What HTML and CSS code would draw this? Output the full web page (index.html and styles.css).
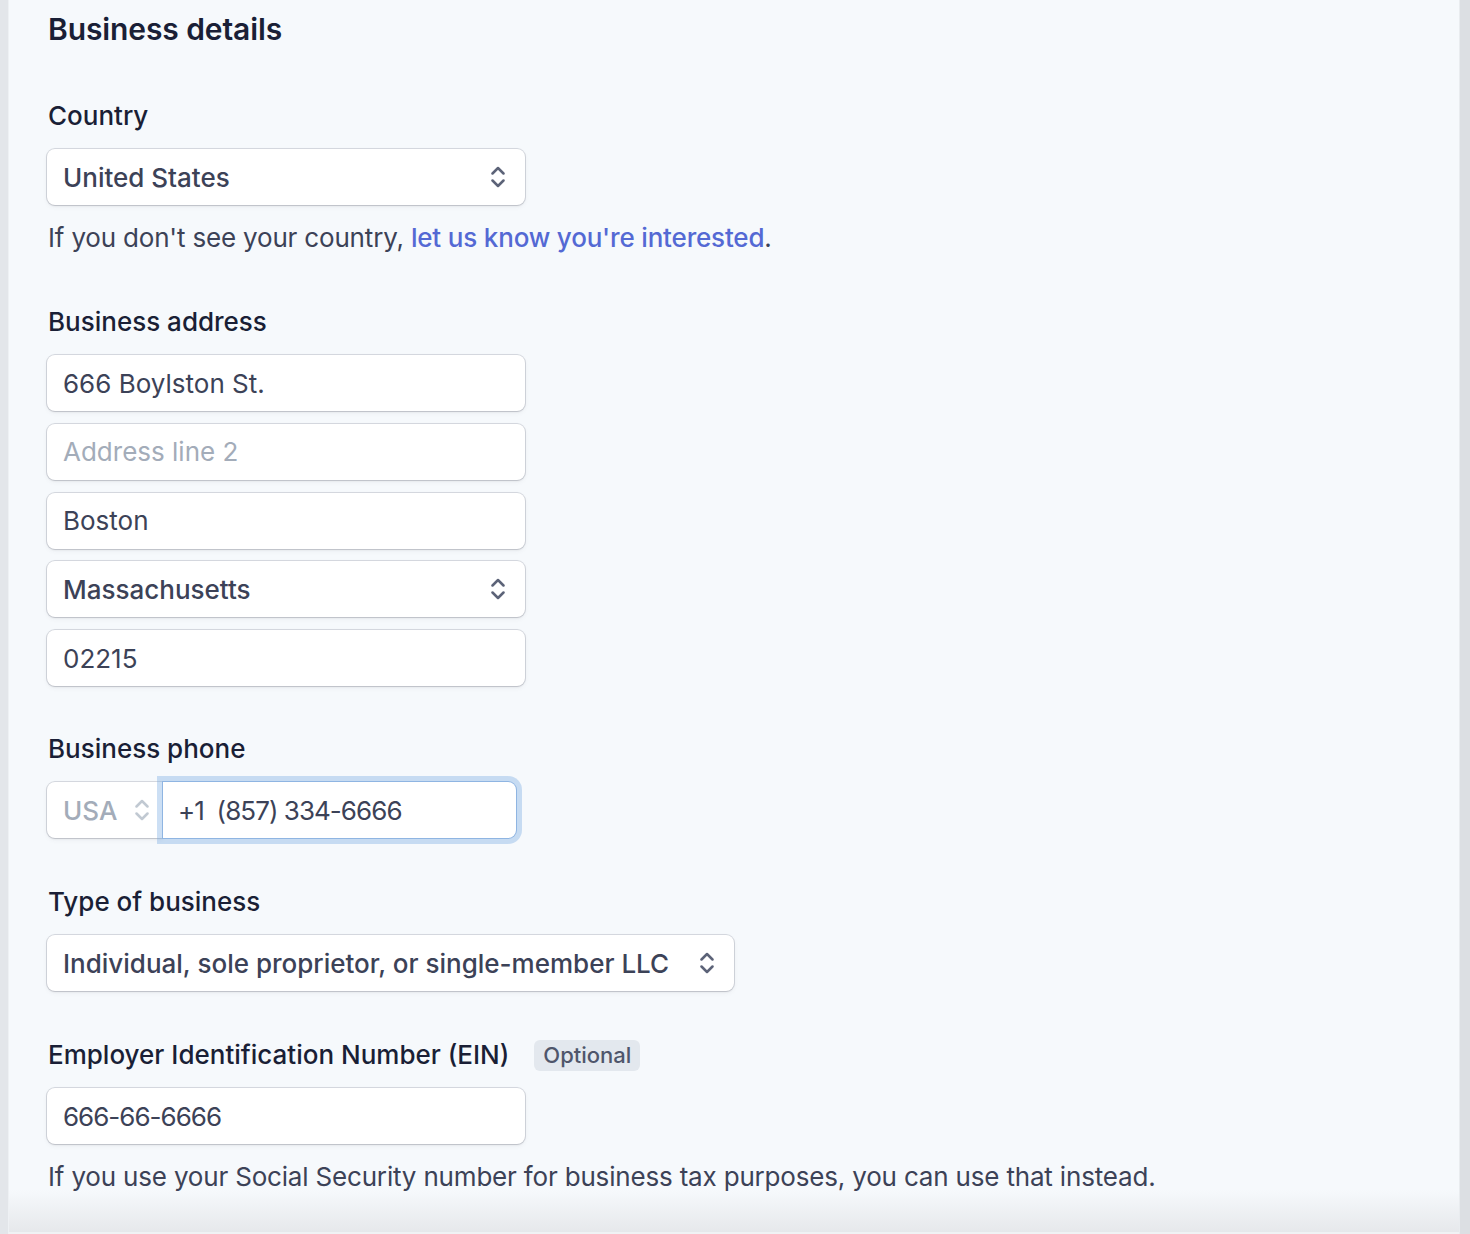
FILE: index.html
```html
<!DOCTYPE html>
<html lang="en">
<head>
<meta charset="utf-8">
<title>Business details</title>
<link rel="stylesheet" href="styles.css">
</head>
<body>
<div class="frame">
  <div class="edge edge-left"></div>
  <main class="panel">
    <h1 class="title">Business details</h1>

    <section class="group first">
      <div class="label">Country</div>
      <div class="field select">
        <span class="value strong">United States</span>
        <svg class="chev" viewBox="0 0 14 24" width="14" height="24"><polyline points="1.5,8.5 7,3 12.5,8.5"/><polyline points="1.5,15.5 7,21 12.5,15.5"/></svg>
      </div>
      <p class="help">If you don't see your country, <a class="link" href="#">let us know you're interested</a>.</p>
    </section>

    <section class="group after-help">
      <div class="label">Business address</div>
      <div class="stack">
        <div class="field"><span class="value">666 Boylston St.</span></div>
        <div class="field"><span class="value placeholder">Address line 2</span></div>
        <div class="field"><span class="value">Boston</span></div>
        <div class="field select">
          <span class="value strong">Massachusetts</span>
          <svg class="chev" viewBox="0 0 14 24" width="14" height="24"><polyline points="1.5,8.5 7,3 12.5,8.5"/><polyline points="1.5,15.5 7,21 12.5,15.5"/></svg>
        </div>
        <div class="field"><span class="value">02215</span></div>
      </div>
    </section>

    <section class="group phone-group">
      <div class="label">Business phone</div>
      <div class="phone">
        <div class="field cc">
          <span class="value strong muted">USA</span>
          <svg class="chev light" viewBox="0 0 14 24" width="14" height="24"><polyline points="1.5,8.5 7,3 12.5,8.5"/><polyline points="1.5,15.5 7,21 12.5,15.5"/></svg>
        </div>
        <div class="field num focus"><span class="value phone-value">+1&nbsp;&nbsp;(857) 334-6666</span></div>
      </div>
    </section>

    <section class="group">
      <div class="label">Type of business</div>
      <div class="field select wide">
        <span class="value strong">Individual, sole proprietor, or single-member LLC</span>
        <svg class="chev" viewBox="0 0 14 24" width="14" height="24"><polyline points="1.5,8.5 7,3 12.5,8.5"/><polyline points="1.5,15.5 7,21 12.5,15.5"/></svg>
      </div>
    </section>

    <section class="group">
      <div class="label">Employer Identification Number (EIN) <span class="badge">Optional</span></div>
      <div class="field"><span class="value ein-value">666-66-6666</span></div>
      <p class="help">If you use your Social Security number for business tax purposes, you can use that instead.</p>
    </section>
    <div class="fade"></div>
  </main>
  <div class="edge edge-right"></div>
</div>
</body>
</html>
```

FILE: styles.css
```css
* { box-sizing: border-box; }

html, body {
  margin: 0;
  padding: 0;
  height: 1234px;
  overflow: hidden;
}

body {
  font-family: Inter, "Liberation Sans", Arial, sans-serif;
  color: #1a1f36;
  background: #f6f9fc;
}

.frame {
  display: grid;
  grid-template-columns: 9px 1fr 11px;
  height: 1234px;
}

.edge-left {
  background: #e3e6ea;
  border-right: 1px solid #eef1f4;
}

.edge-right {
  background: #dcdfe3;
  border-left: 1px solid #e9ecef;
}

.panel {
  position: relative;
  background: #f6f9fc;
  padding: 11px 0 0 38px;
  overflow: hidden;
}

.title {
  margin: 0 0 0 1px;
  font-size: 30px;
  line-height: 36px;
  font-weight: 600;
  letter-spacing: -0.1px;
  color: #1a1f36;
}

.group { margin-top: 49px; }
.group.first { margin-top: 54px; }
.group.after-help { margin-top: 54px; }
.group.phone-group { margin-top: 48px; }

.label {
  display: flex;
  align-items: center;
  height: 30px;
  font-size: 26px;
  line-height: 30px;
  font-weight: 500;
  color: #1a1f36;
  margin: 0 0 18px 1px;
}

.badge {
  display: inline-flex;
  align-items: center;
  margin-left: 25px;
  height: 31px;
  padding: 0 9px;
  border-radius: 6px;
  background: #e3e8ee;
  color: #4f566b;
  font-size: 22px;
  font-weight: 500;
}

.field {
  display: flex;
  align-items: center;
  justify-content: space-between;
  width: 478px;
  height: 56px;
  padding: 0 20px 0 16px;
  background: #ffffff;
  border-radius: 8px;
  box-shadow: 0 0 0 1px rgba(60, 66, 87, 0.17), 0 1px 2px rgba(0, 0, 0, 0.10), 0 2px 5px rgba(60, 66, 87, 0.06);
}

.field.wide { width: 687px; }

.stack {
  display: flex;
  flex-direction: column;
  gap: 12.75px;
}

.value {
  font-size: 26px;
  font-weight: 400;
  color: #3c4257;
  white-space: nowrap;
}

.value.strong { font-weight: 500; }
.value.placeholder { color: #a3acb9; }
.value.muted { color: #a3acb9; }
.phone-value { letter-spacing: -0.95px; }
.ein-value { letter-spacing: -1px; }

.chev {
  flex: none;
  fill: none;
  stroke: #5c6378;
  stroke-width: 2.5;
  stroke-linecap: round;
  stroke-linejoin: round;
}

.chev.light { stroke: #c1c9d2; }

.help {
  margin: 18px 0 0 1px;
  font-size: 26px;
  line-height: 30px;
  letter-spacing: -0.18px;
  color: #3c4257;
}

.link {
  color: #5469d4;
  font-weight: 500;
  text-decoration: none;
}

.phone {
  display: flex;
}

.field.cc {
  width: 116px;
  border-radius: 8px 0 0 8px;
  padding: 0 14px 0 16px;
}

.field.num {
  position: relative;
  width: 353px;
  border-radius: 0 8px 8px 0;
  padding-left: 15px;
}

.field.focus {
  box-shadow: 0 0 0 1px #8fb5e2, 0 0 0 6px rgba(122, 170, 226, 0.38);
}

.fade {
  position: absolute;
  left: 0;
  right: 0;
  bottom: 0;
  height: 44px;
  background: linear-gradient(to bottom, rgba(230, 232, 235, 0) 0%, rgba(230, 232, 235, 1) 100%);
  border-bottom: 2px solid #f0f2f4;
  pointer-events: none;
}
```
